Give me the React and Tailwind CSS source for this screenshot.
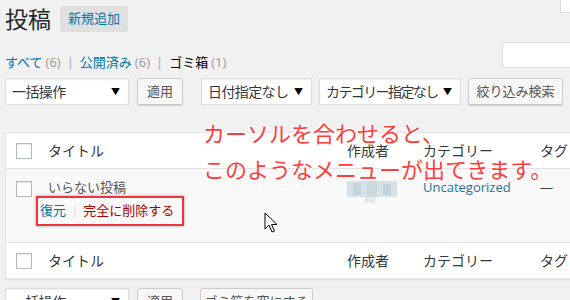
import React from 'react'

// ── Shared bits
const FONT = "font-['Open_Sans','Noto_Sans_CJK_JP',sans-serif]"

function Select({ label, width, tight }) {
  return (
    <div className={`${width} h-[27px] bg-white border border-[#ddd] shadow-[inset_0_1px_2px_rgba(0,0,0,0.07)] flex items-center justify-between pl-[6px] pr-[8px] text-[14px] text-[#32373c] whitespace-nowrap`}>
      <span className={tight ? 'tracking-[-1.6px]' : 'tracking-[-0.6px]'}>{label}</span>
      <span className="text-[9px] text-black">▼</span>
    </div>
  )
}

function Button({ label, width }) {
  return (
    <div className={`${width} h-[27px] bg-[#f7f7f7] border border-[#ccc] rounded-[3px] shadow-[0_1px_0_#ccc] flex items-center justify-center text-[13px] text-[#555] whitespace-nowrap`}>
      {label}
    </div>
  )
}

function Checkbox() {
  return <div className="w-[16px] h-[16px] bg-white border border-[#b4b9be] shadow-[inset_0_1px_2px_rgba(0,0,0,0.1)]" />
}

function HeaderRow({ bordered }) {
  return (
    <div className={`grid grid-cols-[42px_299px_76px_117px_1fr] h-[36px] items-center text-[14px] text-[#32373c] ${bordered ? 'border-t border-[#e1e1e1]' : 'border-b border-[#e1e1e1]'}`}>
      <div className="pl-[10px]"><Checkbox /></div>
      <div>タイトル</div>
      <div>作成者</div>
      <div>カテゴリー</div>
      <div>タグ</div>
    </div>
  )
}

export default function App() {
  return (
    <div className={`relative w-[570px] h-[300px] overflow-hidden bg-[#f1f1f1] ${FONT}`}>

      {/* Title + screen options tab */}
      <div className="flex justify-between items-start pt-[6px] pl-[5px]">
        <div className="flex items-center h-[26px]">
          <h1 className="text-[23px] leading-[26px] text-[#23282d]">投稿</h1>
          <div className="ml-[9px] h-[26px] px-[8px] bg-[#e0e0e0] rounded-[2px] flex items-center text-[13px] text-[#0073aa]">新規追加</div>
        </div>
        <div className="-mt-[6px] w-[10px] h-[13px] bg-white border-l border-b border-[#ddd]" />
      </div>

      {/* Status links + search */}
      <div className="flex justify-between items-start pl-[5px]">
        <div className="mt-[20px] leading-[20px] text-[13px] text-[#666] flex items-center">
          <span className="text-[#0073aa]">すべて</span>
          <span className="ml-[3px] text-[#999]">(6)</span>
          <span className="mx-[6px] text-[#a0a5aa]">|</span>
          <span className="text-[#0073aa]">公開済み</span>
          <span className="ml-[3px] text-[#999]">(6)</span>
          <span className="mx-[6px] text-[#a0a5aa]">|</span>
          <span className="text-black">ゴミ箱</span>
          <span className="ml-[3px] text-[#999]">(1)</span>
        </div>
        <div className="mt-[10px] -mr-[12px] w-[80px] h-[26px] bg-white border border-[#ddd]" />
      </div>

      {/* Filters */}
      <div className="mt-[6px] pl-[5px] flex items-center">
        <Select label="一括操作" width="w-[124px]" />
        <div className="ml-[8px]"><Button label="適用" width="w-[46px]" /></div>
        <div className="ml-[18px]"><Select label="日付指定なし" width="w-[111px]" /></div>
        <div className="ml-[7px]"><Select label="カテゴリー指定なし" width="w-[142px]" tight /></div>
        <div className="ml-[7px]"><Button label="絞り込み検索" width="w-[95px]" /></div>
      </div>

      {/* Table */}
      <div className="mt-[27px] ml-[5px] w-[600px] bg-white border border-[#e5e5e5] shadow-[0_1px_1px_rgba(0,0,0,0.06)]">
        <HeaderRow />

        <div className="grid grid-cols-[42px_299px_76px_117px_1fr] h-[73px] bg-[#f9f9f9] text-[13px] text-[#555]">
          <div className="pl-[10px] pt-[12px]"><Checkbox /></div>
          <div className="pt-[8px]">
            <div className="leading-[20px] text-[13px] text-[#555]">いらない投稿</div>
            <div className="-mt-[1px] -ml-[12px] inline-flex items-center h-[30px] border-2 border-[#e8383d] pl-[2px] pr-[8px] shadow-[0_0_3px_rgba(0,0,0,0.35)] text-[13px]">
              <span className="text-[#0073aa]">復元</span>
              <span className="mx-[5px] text-[#ddd]">|</span>
              <span className="text-[#a00]">完全に削除する</span>
            </div>
          </div>
          <div className="pt-[12px]">
            <svg width="50" height="24" viewBox="0 0 50 24">
              <rect x="0" y="0" width="50" height="16" fill="#d6e2e7" />
              <rect x="6" y="2" width="8" height="12" fill="#c6d5dc" />
              <rect x="20" y="0" width="10" height="16" fill="#cbd8de" />
              <rect x="36" y="3" width="8" height="11" fill="#c3d3da" />
              <rect x="18" y="16" width="10" height="6" fill="#e2e9ec" />
            </svg>
          </div>
          <div className="pt-[8px] leading-[20px] text-[#21759b]">Uncategorized</div>
          <div className="pt-[8px] leading-[20px] text-[#444]">—</div>
        </div>

        <HeaderRow bordered />
      </div>

      {/* Bottom filters */}
      <div className="mt-[9px] pl-[5px] flex items-center">
        <Select label="一括操作" width="w-[124px]" />
        <div className="ml-[8px]"><Button label="適用" width="w-[46px]" /></div>
        <div className="ml-[17px]"><Button label="ゴミ箱を空にする" width="w-[113px]" /></div>
      </div>

      {/* Annotation */}
      <div className="absolute left-[203px] top-[115px] text-[22px] leading-[36px] text-[#ff3c3c] [text-shadow:-1px_-1px_0_#fff,1px_-1px_0_#fff,-1px_1px_0_#fff,1px_1px_0_#fff,0_0_3px_#fff] whitespace-nowrap">
        <div>カーソルを合わせると、</div>
        <div>このようなメニューが出てきます。</div>
      </div>

      {/* Mouse cursor */}
      <svg className="absolute left-[264px] top-[212px]" width="14" height="22" viewBox="0 0 14 22">
        <path d="M1 1 L1 17 L5 13 L8 20 L10.5 19 L7.5 12.5 L13 12.5 Z" fill="#fff" stroke="#000" strokeWidth="1" strokeLinejoin="miter" />
      </svg>
    </div>
  )
}
